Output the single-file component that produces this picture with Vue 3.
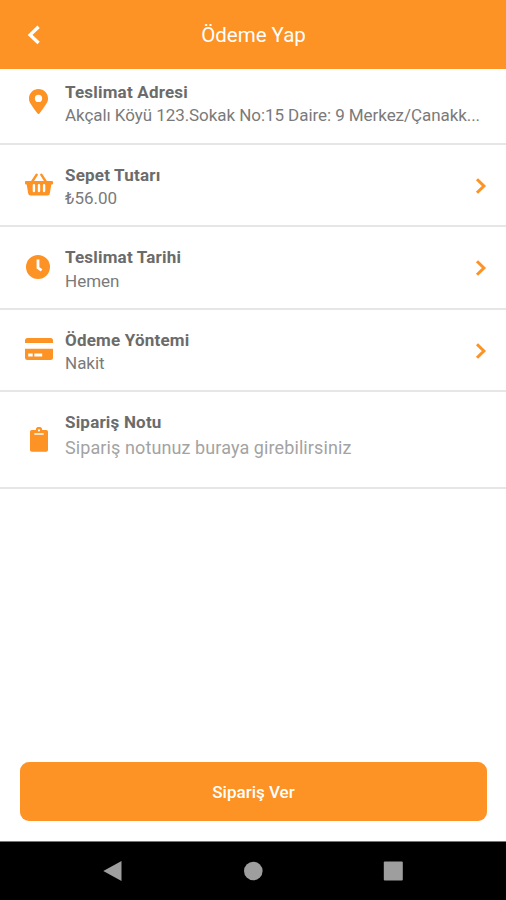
<script setup>
const rows = [
  { id: 'address', title: 'Teslimat Adresi', text: 'Akçalı Köyü 123.Sokak No:15 Daire: 9 Merkez/Çanakk...' },
  { id: 'basket', title: 'Sepet Tutarı', text: '₺56.00', link: true },
  { id: 'date', title: 'Teslimat Tarihi', text: 'Hemen', link: true },
  { id: 'payment', title: 'Ödeme Yöntemi', text: 'Nakit', link: true },
  { id: 'note', title: 'Sipariş Notu', text: 'Sipariş notunuz buraya girebilirsiniz' },
]
</script>

<template>
  <div class="screen">
    <header class="header">
      <svg class="back" width="14" height="20" viewBox="0 0 14 20"><path d="M11.600 1.800 3.200 9.900l8.400 8.100" fill="none" stroke="currentColor" stroke-width="3.400" /></svg>
      <h1>Ödeme Yap</h1>
    </header>

    <main class="list">
      <section v-for="row in rows" :key="row.id" class="row" :class="row.id">
        <div class="icon">
          <svg v-if="row.id === 'address'" width="19" height="25" viewBox="0 0 384 512" preserveAspectRatio="none">
            <path fill="currentColor" fill-rule="evenodd" d="M172.300 501.700C27 291 0 269.400 0 192 0 86 86 0 192 0s192 86 192 192c0 77.400-27 99-172.300 309.700-9.500 13.800-29.900 13.800-39.400 0zM192 266a74 74 0 1 0 0-148 74 74 0 0 0 0 148z" />
          </svg>
          <svg v-else-if="row.id === 'basket'" width="28" height="23" viewBox="0 0 28 23">
            <path d="M6.600 9.500 11.700 1.700M21.400 9.500 16.300 1.700" fill="none" stroke="currentColor" stroke-width="2.400" stroke-linecap="round" />
            <path fill="currentColor" fill-rule="evenodd" d="M1 8h26q1 0 1 1v1.400q0 1-1 1h-.7l-1.500 9q-.3 2-2.300 2h-17q-2 0-2.300-2l-1.500-9H1q-1 0-1-1V9q0-1 1-1zM7.700 12.200v5.900a1.200 1.200 0 0 0 2.400 0v-5.900a1.200 1.200 0 0 0-2.400 0zM12.800 12.200v5.900a1.200 1.200 0 0 0 2.400 0v-5.900a1.200 1.200 0 0 0-2.400 0zM17.900 12.200v5.900a1.200 1.200 0 0 0 2.400 0v-5.900a1.200 1.200 0 0 0-2.400 0z" />
          </svg>
          <svg v-else-if="row.id === 'date'" width="24" height="24" viewBox="0 0 24 24">
            <circle cx="12" cy="12" r="12" fill="currentColor" />
            <path d="M12 4.500v8.300l3.600 2.500" fill="none" stroke="#fff" stroke-width="2.800" />
          </svg>
          <svg v-else-if="row.id === 'payment'" width="28" height="22" viewBox="0 0 28 22">
            <path fill="currentColor" d="M0 5V2.500Q0 0 2.500 0h23Q28 0 28 2.500V5z" />
            <path fill="currentColor" fill-rule="evenodd" d="M0 10.800h28v8.700q0 2.500-2.500 2.500h-23Q0 22 0 19.500zM3.200 15.600v3h4.500v-3zM9.300 15.600v3h7.900v-3z" />
          </svg>
          <svg v-else width="18" height="25" viewBox="0 0 18 25">
            <path fill="currentColor" fill-rule="evenodd" d="M1.800 3h4a3.200 3.200 0 0 1 6.400 0h4Q18 3 18 4.800v18.100q0 1.800-1.800 1.800H1.800Q0 24.700 0 22.900V4.800Q0 3 1.800 3zM9 2.300a1.100 1.100 0 1 0 0 2.200 1.100 1.100 0 0 0 0-2.200zM4.300 6.200v1.500h9.400V6.200z" />
          </svg>
        </div>
        <div class="copy">
          <h2>{{ row.title }}</h2>
          <p>{{ row.text }}</p>
        </div>
        <svg v-if="row.link" class="chevron" width="12" height="18" viewBox="0 0 12 18"><path d="m2 2.200 6.900 6.800L2 15.800" fill="none" stroke="currentColor" stroke-width="3" /></svg>
      </section>
    </main>

    <button class="submit">Sipariş Ver</button>

    <nav class="navbar">
      <svg width="20" height="22" viewBox="0 0 20 22"><path d="M18.500 1v20L.300 11z" fill="currentColor" /></svg>
      <svg width="20" height="22" viewBox="0 0 20 22"><circle cx="10.300" cy="11" r="9.300" fill="currentColor" /></svg>
      <svg width="20" height="22" viewBox="0 0 20 22"><rect x=".8" y="1.500" width="19" height="19" rx="1" fill="currentColor" /></svg>
    </nav>
  </div>
</template>

<style>
body { margin: 0; background: #fff; }
</style>

<style scoped>
.screen {
  width: 506px;
  height: 900px;
  display: flex;
  flex-direction: column;
  background: #fff;
  font-family: Roboto, "Liberation Sans", sans-serif;
  overflow: hidden;
}
.header {
  box-sizing: border-box;
  height: 69px;
  flex: none;
  display: grid;
  grid-template-columns: 40px 1fr 40px;
  align-items: center;
  padding: 0 26px 0 27px;
  background: #fd9225;
  color: #fff;
}
.header h1 {
  margin: 0;
  text-align: center;
  font-size: 20.500px;
  font-weight: 400;
  line-height: 28px;
}
.list { flex: 1; }
.row {
  box-sizing: border-box;
  height: 82.500px;
  display: flex;
  padding: 19px 19px 0 25px;
  border-bottom: 2px solid #e6e6e6;
}
.icon {
  width: 28px;
  height: 41px;
  margin-right: 12px;
  display: flex;
  flex: none;
  align-items: center;
  justify-content: center;
  color: #fd9225;
}
.copy { flex: 1; min-width: 0; white-space: nowrap; color: #6b6b6b; }
.copy h2, .copy p {
  margin: 0;
  font-size: 17px;
  line-height: 23.500px;
}
.copy h2 { font-weight: 700; letter-spacing: 0.2px; }
.copy p { font-weight: 400; color: #7a7a7a; }
.chevron { margin-top: 13px; color: #fd9225; }
.date .icon, .address .icon { margin-left: -1px; margin-right: 13px; }
.address { height: 75.500px; padding-top: 12px; }
.address .icon { height: 40px; }
.address p { letter-spacing: -0.06px; line-height: 21.500px; }
.note { height: 97px; padding-top: 18.500px; }
.note .icon { height: 58px; }
.note p { font-size: 18px; line-height: 27px; letter-spacing: 0.1px; color: #a3a3a3; }
.submit {
  flex: none;
  height: 59px;
  margin: 0 19px 20px 20px;
  padding: 1px 0 0;
  border: 0;
  border-radius: 9px;
  background: #fd9225;
  color: #fff;
  font-family: inherit;
  font-size: 17px;
  font-weight: 500;
}
.navbar {
  box-sizing: border-box;
  flex: none;
  height: 59px;
  display: flex;
  align-items: center;
  justify-content: space-between;
  padding: 0 103px;
  border-top: 1px solid #777;
  background: #000;
  color: #9e9e9e;
}
</style>
